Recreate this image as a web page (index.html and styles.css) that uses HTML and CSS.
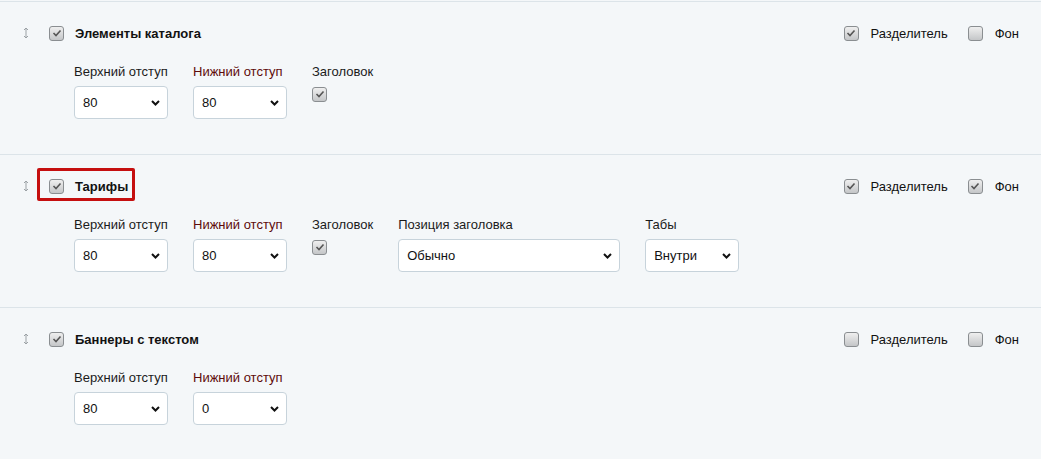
FILE: index.html
```html
<!DOCTYPE html>
<html lang="ru">

<head>
    <meta charset="UTF-8">
    <meta name="viewport" content="width=device-width, initial-scale=1.0">
    <title>Блоки страницы</title>
    <link rel="stylesheet" href="styles.css">
</head>

<body>
    <div class="blocks">
        <!-- Элементы каталога -->
        <div class="block">
            <div class="block-head">
                <span class="drag"><svg width="6" height="12" viewBox="0 0 6 12"><path d="M3 1v10M1 3l2-2 2 2M1 9l2 2 2-2" fill="none" stroke="#9ba1a5" stroke-width="1"/></svg></span>
                <div class="head-main">
                    <span class="cb on"><svg width="10" height="8" viewBox="0 0 10 8"><path d="M1.5 4l2.5 2.5 4.5-5" fill="none" stroke="#555" stroke-width="1.6"/></svg></span>
                    <span class="block-title">Элементы каталога</span>
                </div>
                <div class="head-opts">
                    <label class="opt"><span class="cb on"><svg width="10" height="8" viewBox="0 0 10 8"><path d="M1.5 4l2.5 2.5 4.5-5" fill="none" stroke="#555" stroke-width="1.6"/></svg></span>Разделитель</label>
                    <label class="opt"><span class="cb"></span>Фон</label>
                </div>
            </div>
            <div class="fields">
                <div class="field">
                    <div class="field-label">Верхний отступ</div>
                    <div class="select"><span>80</span><svg width="9" height="6" viewBox="0 0 9 6"><path d="M1 1l3.5 3.5L8 1" fill="none" stroke="#111" stroke-width="2"/></svg></div>
                </div>
                <div class="field">
                    <div class="field-label red">Нижний отступ</div>
                    <div class="select"><span>80</span><svg width="9" height="6" viewBox="0 0 9 6"><path d="M1 1l3.5 3.5L8 1" fill="none" stroke="#111" stroke-width="2"/></svg></div>
                </div>
                <div class="field">
                    <div class="field-label">Заголовок</div>
                    <span class="cb on"><svg width="10" height="8" viewBox="0 0 10 8"><path d="M1.5 4l2.5 2.5 4.5-5" fill="none" stroke="#555" stroke-width="1.6"/></svg></span>
                </div>
            </div>
        </div>

        <!-- Тарифы -->
        <div class="block">
            <div class="block-head">
                <span class="drag"><svg width="6" height="12" viewBox="0 0 6 12"><path d="M3 1v10M1 3l2-2 2 2M1 9l2 2 2-2" fill="none" stroke="#9ba1a5" stroke-width="1"/></svg></span>
                <div class="head-main">
                    <span class="mark"></span>
                    <span class="cb on"><svg width="10" height="8" viewBox="0 0 10 8"><path d="M1.5 4l2.5 2.5 4.5-5" fill="none" stroke="#555" stroke-width="1.6"/></svg></span>
                    <span class="block-title">Тарифы</span>
                </div>
                <div class="head-opts">
                    <label class="opt"><span class="cb on"><svg width="10" height="8" viewBox="0 0 10 8"><path d="M1.5 4l2.5 2.5 4.5-5" fill="none" stroke="#555" stroke-width="1.6"/></svg></span>Разделитель</label>
                    <label class="opt"><span class="cb on"><svg width="10" height="8" viewBox="0 0 10 8"><path d="M1.5 4l2.5 2.5 4.5-5" fill="none" stroke="#555" stroke-width="1.6"/></svg></span>Фон</label>
                </div>
            </div>
            <div class="fields">
                <div class="field">
                    <div class="field-label">Верхний отступ</div>
                    <div class="select"><span>80</span><svg width="9" height="6" viewBox="0 0 9 6"><path d="M1 1l3.5 3.5L8 1" fill="none" stroke="#111" stroke-width="2"/></svg></div>
                </div>
                <div class="field">
                    <div class="field-label red">Нижний отступ</div>
                    <div class="select"><span>80</span><svg width="9" height="6" viewBox="0 0 9 6"><path d="M1 1l3.5 3.5L8 1" fill="none" stroke="#111" stroke-width="2"/></svg></div>
                </div>
                <div class="field">
                    <div class="field-label">Заголовок</div>
                    <span class="cb on"><svg width="10" height="8" viewBox="0 0 10 8"><path d="M1.5 4l2.5 2.5 4.5-5" fill="none" stroke="#555" stroke-width="1.6"/></svg></span>
                </div>
                <div class="field">
                    <div class="field-label">Позиция заголовка</div>
                    <div class="select wide"><span>Обычно</span><svg width="9" height="6" viewBox="0 0 9 6"><path d="M1 1l3.5 3.5L8 1" fill="none" stroke="#111" stroke-width="2"/></svg></div>
                </div>
                <div class="field">
                    <div class="field-label">Табы</div>
                    <div class="select"><span>Внутри</span><svg width="9" height="6" viewBox="0 0 9 6"><path d="M1 1l3.5 3.5L8 1" fill="none" stroke="#111" stroke-width="2"/></svg></div>
                </div>
            </div>
        </div>

        <!-- Баннеры с текстом -->
        <div class="block">
            <div class="block-head">
                <span class="drag"><svg width="6" height="12" viewBox="0 0 6 12"><path d="M3 1v10M1 3l2-2 2 2M1 9l2 2 2-2" fill="none" stroke="#9ba1a5" stroke-width="1"/></svg></span>
                <div class="head-main">
                    <span class="cb on"><svg width="10" height="8" viewBox="0 0 10 8"><path d="M1.5 4l2.5 2.5 4.5-5" fill="none" stroke="#555" stroke-width="1.6"/></svg></span>
                    <span class="block-title">Баннеры с текстом</span>
                </div>
                <div class="head-opts">
                    <label class="opt"><span class="cb"></span>Разделитель</label>
                    <label class="opt"><span class="cb"></span>Фон</label>
                </div>
            </div>
            <div class="fields">
                <div class="field">
                    <div class="field-label">Верхний отступ</div>
                    <div class="select"><span>80</span><svg width="9" height="6" viewBox="0 0 9 6"><path d="M1 1l3.5 3.5L8 1" fill="none" stroke="#111" stroke-width="2"/></svg></div>
                </div>
                <div class="field">
                    <div class="field-label red">Нижний отступ</div>
                    <div class="select"><span>0</span><svg width="9" height="6" viewBox="0 0 9 6"><path d="M1 1l3.5 3.5L8 1" fill="none" stroke="#111" stroke-width="2"/></svg></div>
                </div>
            </div>
        </div>
    </div>
</body>

</html>
```

FILE: styles.css
```css
* {
    margin: 0;
    padding: 0;
    box-sizing: border-box;
}

body {
    background-color: #f4f7f9;
    font-family: "Liberation Sans", Arial, sans-serif;
    font-size: 13px;
    color: #111;
}

.blocks {
    padding-top: 1px;
}

.block {
    border-top: 1px solid #dce4e9;
    padding: 21px 22px 35px 22px;
}

.block-head {
    display: flex;
    align-items: center;
    height: 20px;
}

.drag {
    width: 8px;
    display: flex;
    justify-content: center;
    margin-right: 19px;
}

.head-main {
    position: relative;
    display: flex;
    align-items: center;
}

.head-main .cb {
    margin-right: 11px;
}

.block-title {
    font-weight: bold;
}

/* красная рамка-пометка */
.mark {
    position: absolute;
    left: -12px;
    top: -11px;
    width: 98px;
    height: 33px;
    border: 3px solid #c50f0f;
    border-radius: 2px;
}

.head-opts {
    margin-left: auto;
    display: flex;
    align-items: center;
    gap: 20px;
}

.opt {
    display: flex;
    align-items: center;
    gap: 12px;
}

.cb {
    width: 15px;
    height: 15px;
    border: 1px solid #8a8e91;
    border-radius: 3px;
    background: linear-gradient(#efefef, #c4c6c8);
    display: inline-flex;
    align-items: center;
    justify-content: center;
    flex-shrink: 0;
}

.fields {
    display: flex;
    gap: 25px;
    margin-left: 52px;
    margin-top: 21px;
}

.field-label {
    line-height: 16px;
    margin-bottom: 6px;
    color: #1b1b1b;
}

.field-label.red {
    color: #5e0b0b;
}

.select {
    position: relative;
    width: 94px;
    height: 33px;
    background-color: #fff;
    border: 1px solid #c7d3db;
    border-radius: 4px;
    display: flex;
    align-items: center;
    padding-left: 8px;
}

.select.wide {
    width: 222px;
}

.select svg {
    position: absolute;
    right: 7px;
    top: 13px;
}
```
